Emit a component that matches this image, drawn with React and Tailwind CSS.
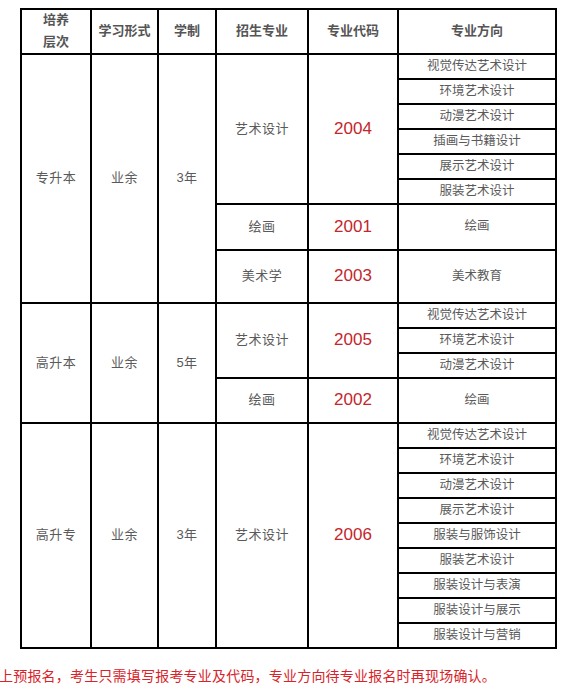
import React from "react";

const cell = "bg-white flex items-center justify-center text-center text-[#5a5a5a]";
const main = cell + " text-[13px] tracking-[0.5px]";
const dir = cell + " text-[12.5px]";
const code = "bg-white flex items-center justify-center text-[#c4262c] text-[17px] font-['Liberation_Sans',sans-serif]";
const head = "bg-white flex items-center justify-center text-center text-[#555] text-[13px] font-bold leading-[22px]";

function Dirs({ items }) {
  return items.map((t, i) => (
    <div key={i} className={dir}>
      {t}
    </div>
  ));
}

export default function App() {
  return (
    <div className="w-[566px] h-[690px] bg-white overflow-hidden font-['Liberation_Sans','Noto_Sans_CJK_SC',sans-serif]">
      <div className="pt-[7px] pl-[20px]">
        <div className="inline-grid bg-black p-[2px] gap-[2px] grid-cols-[68px_65px_56px_90px_88px_156px] grid-rows-[43px_repeat(6,23px)_44px_51px_repeat(3,23px)_43px_repeat(9,23px)]">
          {/* header */}
          <div className={head}>
            培养
            <br />
            层次
          </div>
          <div className={head}>学习形式</div>
          <div className={head}>学制</div>
          <div className={head}>招生专业</div>
          <div className={head}>专业代码</div>
          <div className={head}>专业方向</div>

          {/* block 1 */}
          <div className={main + " row-span-8"}>专升本</div>
          <div className={main + " row-span-8"}>业余</div>
          <div className={main + " row-span-8"}>3年</div>
          <div className={main + " row-span-6"}>艺术设计</div>
          <div className={code + " row-span-6"}>2004</div>
          <Dirs
            items={[
              "视觉传达艺术设计",
              "环境艺术设计",
              "动漫艺术设计",
              "插画与书籍设计",
              "展示艺术设计",
              "服装艺术设计",
            ]}
          />
          <div className={main}>绘画</div>
          <div className={code}>2001</div>
          <div className={dir}>绘画</div>
          <div className={main}>美术学</div>
          <div className={code}>2003</div>
          <div className={dir}>美术教育</div>

          {/* block 2 */}
          <div className={main + " row-span-4"}>高升本</div>
          <div className={main + " row-span-4"}>业余</div>
          <div className={main + " row-span-4"}>5年</div>
          <div className={main + " row-span-3"}>艺术设计</div>
          <div className={code + " row-span-3"}>2005</div>
          <Dirs items={["视觉传达艺术设计", "环境艺术设计", "动漫艺术设计"]} />
          <div className={main}>绘画</div>
          <div className={code}>2002</div>
          <div className={dir}>绘画</div>

          {/* block 3 */}
          <div className={main + " row-span-9"}>高升专</div>
          <div className={main + " row-span-9"}>业余</div>
          <div className={main + " row-span-9"}>3年</div>
          <div className={main + " row-span-9"}>艺术设计</div>
          <div className={code + " row-span-9"}>2006</div>
          <Dirs
            items={[
              "视觉传达艺术设计",
              "环境艺术设计",
              "动漫艺术设计",
              "展示艺术设计",
              "服装与服饰设计",
              "服装艺术设计",
              "服装设计与表演",
              "服装设计与展示",
              "服装设计与营销",
            ]}
          />
        </div>
      </div>
      <p className="mt-[17px] -ml-[1px] text-[14px] tracking-[0.2px] leading-[20px] text-[#d8232a] whitespace-nowrap">
        上预报名，考生只需填写报考专业及代码，专业方向待专业报名时再现场确认。
      </p>
    </div>
  );
}
